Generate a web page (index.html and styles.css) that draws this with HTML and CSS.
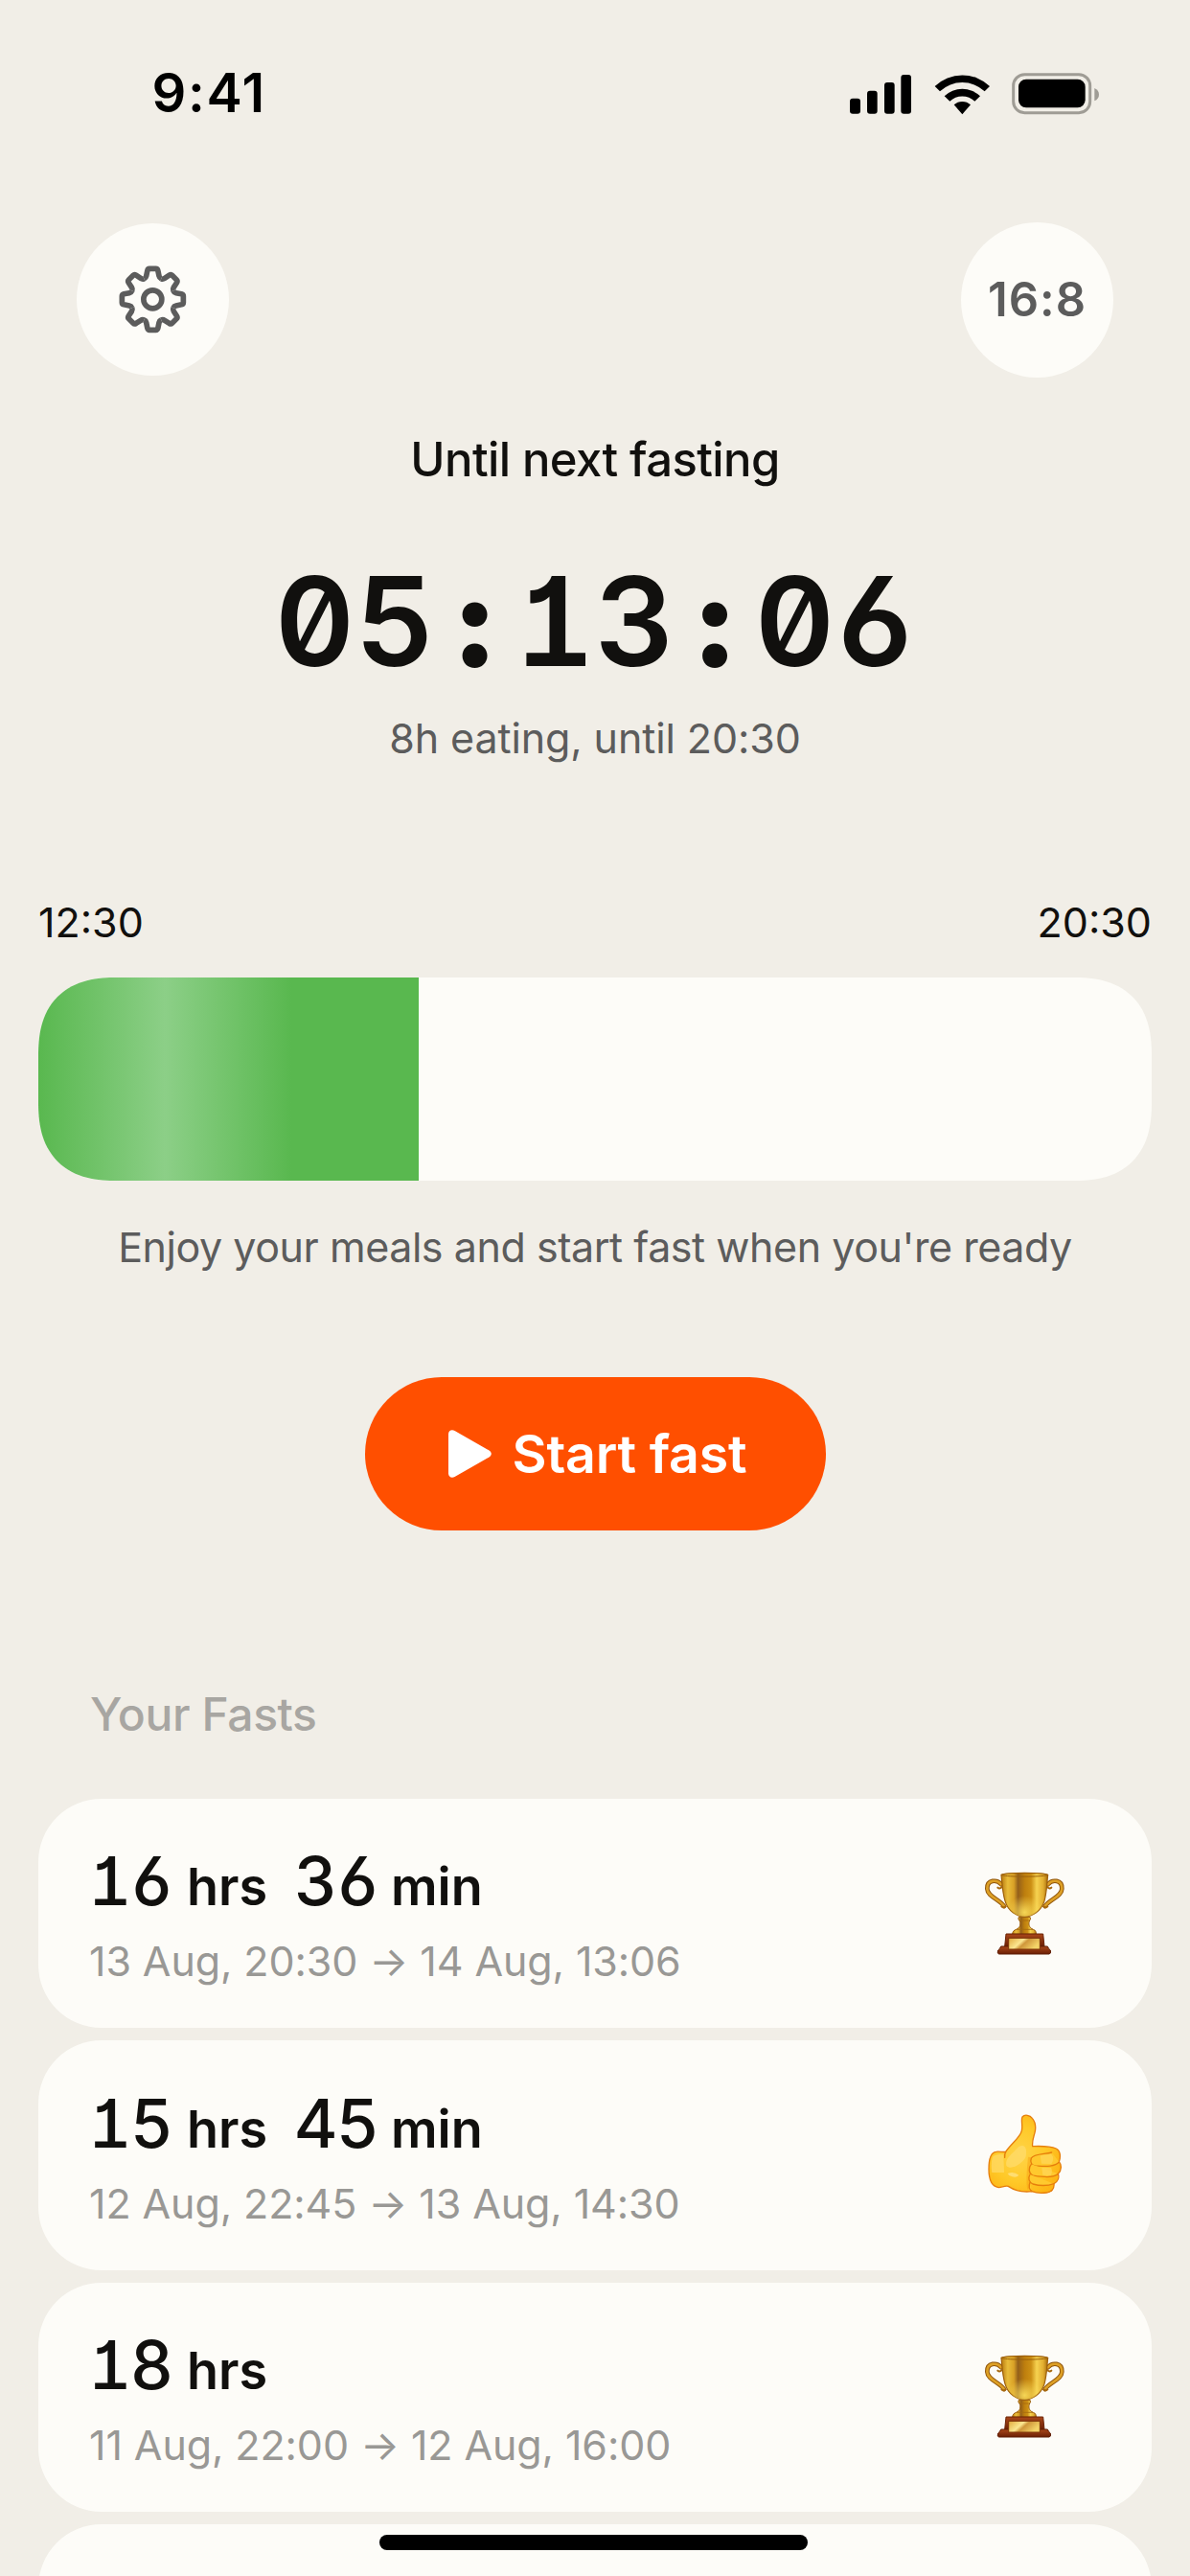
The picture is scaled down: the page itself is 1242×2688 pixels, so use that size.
FILE: index.html
```html
<!DOCTYPE html>
<html lang="en">
<head>
    <meta charset="UTF-8">
    <meta name="viewport" content="width=device-width, initial-scale=1.0">
    <title>Fasting Tracker</title>
    <link rel="stylesheet" href="styles.css">
</head>
<body>

<!-- Shared shapes -->
<svg class="symbols" aria-hidden="true">
    <defs>
        <linearGradient id="cup-gold" x1="0" x2="1" y1="0" y2="0">
            <stop offset="0" stop-color="#b97a10"/>
            <stop offset="0.14" stop-color="#e9bd3a"/>
            <stop offset="0.27" stop-color="#d9a126"/>
            <stop offset="0.36" stop-color="#94601a"/>
            <stop offset="0.5" stop-color="#bd7e0e"/>
            <stop offset="0.64" stop-color="#cc8f14"/>
            <stop offset="0.76" stop-color="#f6d250"/>
            <stop offset="0.9" stop-color="#e2ae30"/>
            <stop offset="1" stop-color="#a66c0c"/>
        </linearGradient>
        <radialGradient id="cup-shine" cx="0.5" cy="0.9" r="0.38">
            <stop offset="0" stop-color="#ffe562" stop-opacity="0.85"/>
            <stop offset="1" stop-color="#ffe562" stop-opacity="0"/>
        </radialGradient>
        <linearGradient id="base-wood" x1="0" x2="0" y1="0" y2="1">
            <stop offset="0" stop-color="#a9471a"/>
            <stop offset="1" stop-color="#6b1f05"/>
        </linearGradient>
        <linearGradient id="plate" x1="0" x2="1" y1="0" y2="0.4">
            <stop offset="0" stop-color="#e0a83a"/>
            <stop offset="0.45" stop-color="#fbe791"/>
            <stop offset="0.6" stop-color="#cf963a"/>
            <stop offset="1" stop-color="#f4d468"/>
        </linearGradient>
        <radialGradient id="hand" cx="0.42" cy="0.5" r="0.6">
            <stop offset="0" stop-color="#ffd449"/>
            <stop offset="0.6" stop-color="#ffc928"/>
            <stop offset="1" stop-color="#fdb515"/>
        </radialGradient>
        <path id="tooth" d="M-26.8-64.7Q-21.3-67-20-73L-16.5-90Q-15-96-10-96H10Q15-96 16.5-90L20-73Q21.3-67 26.8-64.7"/>
    </defs>
    <symbol id="trophy" viewBox="0 20 420 420">
        <g fill="none" stroke-linecap="round">
            <path d="M135 138C122 122 90 122 91 152C92 176 128 184 144 206M281 138C294 122 326 122 325 152C324 176 288 184 272 206" stroke="#8f540a" stroke-width="14"/>
            <path d="M135 138C122 122 90 122 91 152C92 176 128 184 144 206M281 138C294 122 326 122 325 152C324 176 288 184 272 206" stroke="#dda026" stroke-width="8"/>
            <path d="M124 148Q130 153 136 147M292 148Q286 153 280 147M136 207Q142 213 149 207M280 207Q274 213 267 207" stroke="#a8690f" stroke-width="6"/>
        </g>
        <path d="M135 108C150 100 266 100 281 108C278 134 278 160 270 190C260 222 232 239 208 239C184 239 156 222 147 190C138 160 138 134 135 108Z" fill="url(#cup-gold)" stroke="#9d5f0a" stroke-width="3.5"/>
        <path d="M135 108C150 100 266 100 281 108C278 134 278 160 270 190C260 222 232 239 208 239C184 239 156 222 147 190C138 160 138 134 135 108Z" fill="url(#cup-shine)"/>
        <path d="M137 109C155 115 261 115 279 109" fill="none" stroke="#9c610c" stroke-width="3"/>
        <path d="M190 240H225Q229 246 224 251C219 262 222 274 235 279C242 281 245 287 244 294H170C170 286 175 281 182 279C195 273 197 262 192 251Q186 246 190 240Z" fill="url(#cup-gold)" stroke="#9a5c0c" stroke-width="3"/>
        <path d="M192 251H224M183 279H234" stroke="#a66a10" stroke-width="2.5"/>
        <path d="M150 293H266L270 332H146Z" fill="url(#base-wood)" stroke="#6a2205" stroke-width="3"/>
        <path d="M134 332H280Q283 340 289 344Q292 355 285 356H128Q121 355 125 344Q131 340 134 332Z" fill="url(#base-wood)" stroke="#5e1c04" stroke-width="3"/>
        <rect x="158" y="306" width="98" height="35" fill="url(#plate)" stroke="#7c3408" stroke-width="3"/>
    </symbol>
    <symbol id="thumb" viewBox="0 -2 420 420">
        <path d="M149 197C166 171 194 153 199 131C203 115 196 97 201 88C208 79 225 82 232 92C242 104 244 121 240 137C236 153 231 163 233 180C258 179 293 181 307 187C320 193 322 212 316 228C324 237 325 254 313 266C317 277 313 290 300 297C302 313 291 324 277 325C262 327 241 325 231 321C205 324 178 319 157 305C146 302 137 309 127 309C105 306 96 282 96 251C96 220 103 199 119 197C129 195 140 199 149 197Z" fill="url(#hand)" stroke="#e67e0c" stroke-width="4" stroke-linejoin="round"/>
        <path d="M108 213C104 225 103 246 106 262H144Q143 225 141 206Q118 203 108 213Z" fill="#ffd965" opacity="0.75"/>
        <path d="M151 240C146 218 168 205 190 181C208 172 217 184 212 212C203 235 164 257 151 240Z" fill="#ffdb68" opacity="0.8"/>
        <path d="M155 265Q174 257 190 270Q181 282 160 271Z" fill="#ffe07c" opacity="0.85"/>
        <path d="M224 214C222 240 215 290 222 314" fill="none" stroke="#f6980c" stroke-width="10" opacity="0.4"/>
        <g fill="#ffc92e" stroke="#e67e0c" stroke-width="4" stroke-linecap="round">
            <path d="M293 199C268 205 236 203 229 217C224 231 231 239 242 241C268 242 302 246 316 229"/>
            <path d="M229 236C220 246 220 264 233 271C260 275 298 281 313 266"/>
            <path d="M225 268C218 280 222 293 234 298C256 304 283 303 300 297"/>
            <path d="M225 293C221 304 222 315 231 321"/>
            <path d="M149 197Q145 204 146 215" fill="none"/>
        </g>
        <path d="M257 209L291 204Q304 216 292 235L261 234ZM262 247H291Q297 257 290 271L265 270Z" fill="#ffdb62" opacity="0.6"/>
    </symbol>
</svg>

<div class="screen">
    <!-- Status bar -->
    <div class="status-bar">
        <span class="clock">9:41</span>
        <svg class="status-icons" viewBox="135 105 780 135">
            <rect x="135" y="188" width="33" height="48" rx="9"/>
            <rect x="189" y="164" width="32" height="72" rx="9"/>
            <rect x="243" y="138" width="32" height="98" rx="9"/>
            <rect x="295" y="114" width="32" height="122" rx="9"/>
            <path d="M401 150A124 124 0 0 1 573 150L557 166A102 102 0 0 0 417 166Z"/>
            <path d="M431 181A80 80 0 0 1 543 181L526 197A57 57 0 0 0 448 197Z"/>
            <path d="M461 208A38 38 0 0 1 513 208L487 238Z"/>
            <rect x="647" y="113" width="240" height="120" rx="35" fill="none" stroke="#9f9c95" stroke-width="9"/>
            <rect x="663" y="128" width="209" height="89" rx="24"/>
            <path d="M901 156Q915 163 915 176Q915 189 901 196Z" fill="#9f9c95"/>
        </svg>
    </div>

    <!-- Top buttons -->
    <div class="top-nav">
        <div class="round-button settings">
            <svg class="gear" viewBox="-106 -106 212 212">
                <use href="#tooth"/>
                <use href="#tooth" transform="rotate(45)"/>
                <use href="#tooth" transform="rotate(90)"/>
                <use href="#tooth" transform="rotate(135)"/>
                <use href="#tooth" transform="rotate(180)"/>
                <use href="#tooth" transform="rotate(225)"/>
                <use href="#tooth" transform="rotate(270)"/>
                <use href="#tooth" transform="rotate(315)"/>
                <circle r="28.5"/>
            </svg>
        </div>
        <div class="round-button plan">16:8</div>
    </div>

    <!-- Countdown -->
    <h1 class="title">Until next fasting</h1>
    <div class="timer">05<span>:</span>13<span>:</span>06</div>
    <p class="subtitle">8h eating, until 20:30</p>

    <!-- Eating window -->
    <div class="window-times">
        <span>12:30</span>
        <span>20:30</span>
    </div>
    <div class="progress">
        <div class="progress-fill" style="width: 34.17%"></div>
    </div>
    <p class="hint">Enjoy your meals and start fast when you're ready</p>

    <button class="start-button">
        <svg class="play" viewBox="0 0 45 50">
            <path d="M0 4.5C0 .8 3.500-.8 6.600 1L42.500 21.500C45.500 23.500 45.500 26.500 42.500 28.500L6.600 49C3.500 50.800 0 49.200 0 45.500Z"/>
        </svg>
        <span>Start fast</span>
    </button>

    <!-- History -->
    <h2 class="section-title">Your Fasts</h2>
    <div class="fast-list">
        <div class="fast-card">
            <div>
                <div class="duration"><b>16</b><span>hrs</span><b>36</b><span>min</span></div>
                <div class="range">13 Aug, 20:30 → 14 Aug, 13:06</div>
            </div>
            <svg class="badge"><use href="#trophy"/></svg>
        </div>
        <div class="fast-card">
            <div>
                <div class="duration"><b>15</b><span>hrs</span><b>45</b><span>min</span></div>
                <div class="range">12 Aug, 22:45 → 13 Aug, 14:30</div>
            </div>
            <svg class="badge"><use href="#thumb"/></svg>
        </div>
        <div class="fast-card">
            <div>
                <div class="duration"><b>18</b><span>hrs</span></div>
                <div class="range">11 Aug, 22:00 → 12 Aug, 16:00</div>
            </div>
            <svg class="badge"><use href="#trophy"/></svg>
        </div>
        <div class="fast-card"></div>
    </div>

    <div class="home-indicator"></div>
</div>

</body>
</html>
```
FILE: styles.css
```css
* {
    box-sizing: border-box;
}
body {
    margin: 0;
    background-color: #f1eee7;
    color: #11100e;
    font-family: Inter, "Liberation Sans", sans-serif;
}
h1, h2, p {
    margin: 0;
    font-weight: 400;
}
.symbols {
    position: absolute;
    width: 0;
    height: 0;
}
.screen {
    position: relative;
    display: flex;
    flex-direction: column;
    width: 1242px;
    height: 2688px;
    padding: 67px 40px 0;
    overflow: hidden;
}

/* Status bar */
.status-bar {
    display: flex;
    justify-content: space-between;
    align-items: center;
    height: 60px;
    padding: 0 55px 0 118.500px;
    color: #000;
}
.clock {
    font-size: 56px;
    font-weight: 600;
    letter-spacing: 1.600px;
    line-height: 60px;
}
.status-icons {
    width: 260px;
    height: 45px;
}

/* Top buttons */
.top-nav {
    display: flex;
    justify-content: space-between;
    align-items: center;
    height: 162px;
    margin-top: 104.500px;
    padding: 0 40px;
}
.round-button {
    display: flex;
    justify-content: center;
    align-items: center;
    width: 159px;
    height: 159px;
    border-radius: 50%;
    background-color: #fdfcf8;
    color: #5c5c5c;
}
.plan {
    height: 162px;
    font-size: 49px;
    font-weight: 600;
    letter-spacing: 1px;
}
.gear {
    width: 70.700px;
    height: 70.700px;
    fill: none;
    stroke: #5c5c5c;
    stroke-width: 17;
}

/* Countdown */
.title {
    margin-top: 56px;
    font-size: 49px;
    font-weight: 500;
    letter-spacing: -0.600px;
    line-height: 60px;
    text-align: center;
}
.timer {
    margin-top: 68px;
    font-size: 129px;
    font-weight: 600;
    letter-spacing: 0.300px;
    line-height: 140px;
    text-align: center;
    font-feature-settings: "tnum", "zero", "cv01", "cv03";
}
.timer span {
    display: inline-block;
    width: 83px;
    font-weight: 900;
    font-feature-settings: "calt" 0;
}
.subtitle,
.hint,
.window-times {
    font-size: 43px;
    line-height: 52px;
}
.subtitle,
.hint {
    color: #5c5c5c;
    text-align: center;
}
.subtitle {
    margin-top: 26px;
    letter-spacing: -0.100px;
}

/* Eating window */
.window-times {
    display: flex;
    justify-content: space-between;
    margin-top: 140.500px;
}
.progress {
    height: 212px;
    margin-top: 31.700px;
    border-radius: 66px;
    background-color: #fdfcf8;
    overflow: hidden;
    flex-shrink: 0;
}
@supports (corner-shape: superellipse(1.3)) {
    .progress {
        border-radius: 82px;
        corner-shape: superellipse(1.3);
    }
}
.progress-fill {
    height: 100%;
    background: linear-gradient(90deg, #59b84f 0, #8ccf87 132px, #59b84f 264px);
}
.hint {
    margin-top: 43px;
    letter-spacing: -0.450px;
}

/* Start button */
.start-button {
    display: flex;
    align-self: center;
    align-items: center;
    flex-shrink: 0;
    width: 481px;
    height: 160px;
    margin-top: 110px;
    padding: 0 0 0 87px;
    border: none;
    border-radius: 80px;
    background-color: #ff4f00;
    color: #fff;
    font-family: inherit;
    font-size: 55.5px;
    font-weight: 600;
    letter-spacing: -0.200px;
}
.play {
    width: 45px;
    height: 50px;
    margin-right: 22px;
    fill: #fff;
}

/* History */
.section-title {
    margin: 162px 0 58.300px 54px;
    color: #a8a6a2;
    font-size: 48px;
    font-weight: 500;
    letter-spacing: -0.400px;
    line-height: 60px;
}
.fast-list {
    display: flex;
    flex-direction: column;
    gap: 13px;
}
.fast-card {
    display: flex;
    justify-content: space-between;
    align-items: center;
    flex-shrink: 0;
    height: 239.400px;
    padding: 0 62px 0 54px;
    border-radius: 66px;
    background-color: #fdfcf8;
}
.duration {
    display: flex;
    align-items: baseline;
    height: 82px;
    padding-top: 2px;
    line-height: 80px;
}
.duration b {
    width: 85px;
    font-size: 70px;
    font-weight: 500;
    letter-spacing: -1.500px;
    font-feature-settings: "tnum", "zero", "cv01", "cv03";
}
.duration b:first-child {
    width: 87px;
    margin-left: -2px;
}
.duration span {
    width: 112px;
    margin-left: 16px;
    font-size: 54px;
    font-weight: 600;
}
.range {
    margin-top: 17px;
    margin-left: -1px;
    color: #999895;
    font-size: 43px;
    letter-spacing: -0.090px;
    line-height: 52px;
}
.badge {
    width: 140px;
    height: 140px;
}

/* Home indicator */
.home-indicator {
    position: absolute;
    left: 396px;
    bottom: 27px;
    width: 447px;
    height: 16px;
    border-radius: 8px;
    background-color: #000;
}
```
